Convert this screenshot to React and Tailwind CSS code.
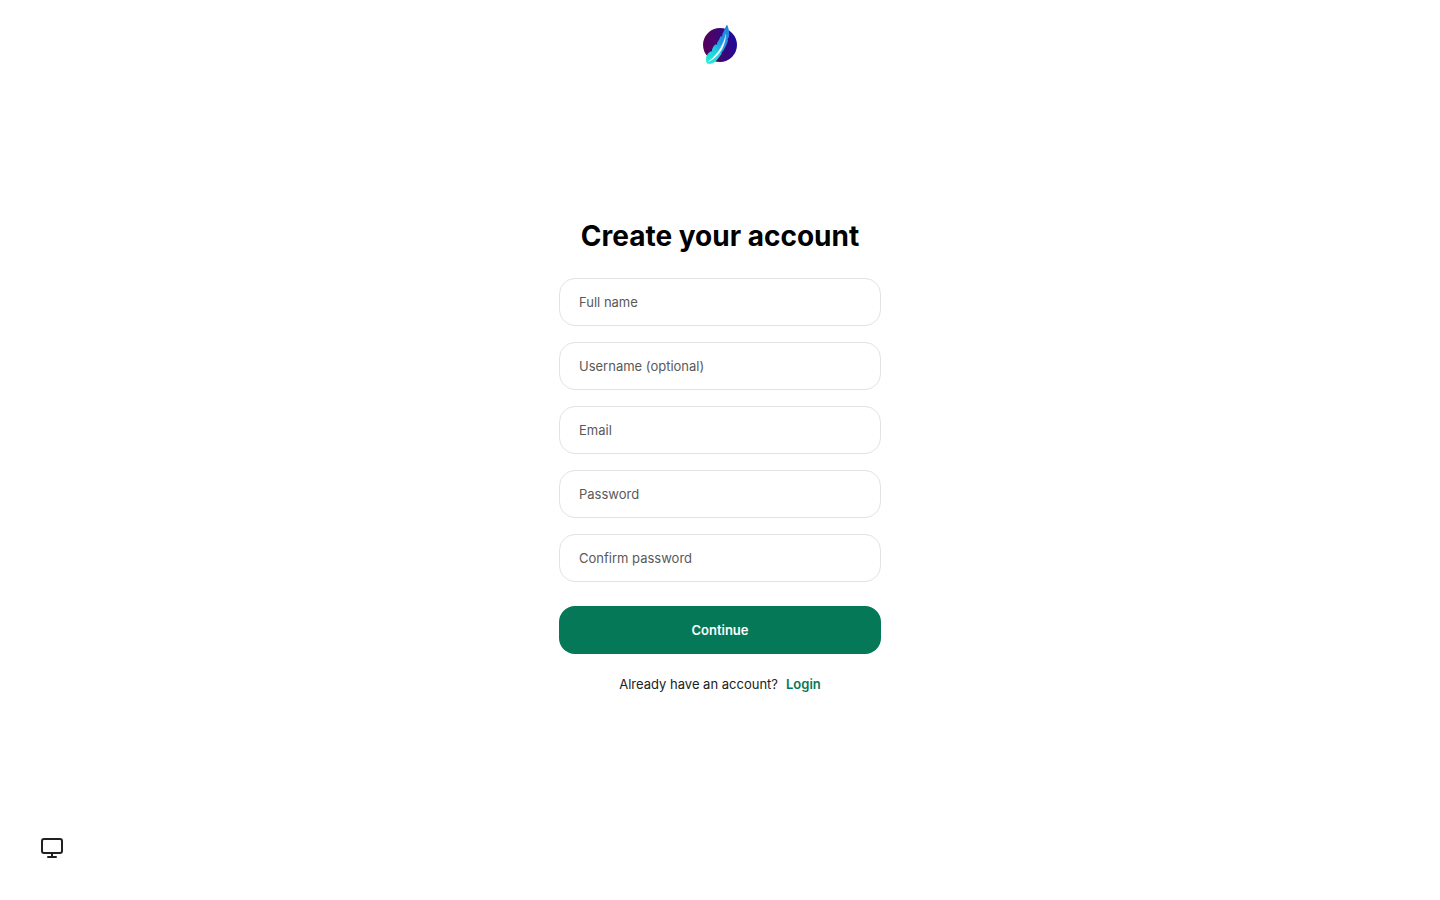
import { Monitor } from "lucide-react";

const fields = [
  { id: "name", label: "Full name", type: "text", autoComplete: "name" },
  { id: "username", label: "Username (optional)", type: "text", autoComplete: "username" },
  { id: "email", label: "Email", type: "email", autoComplete: "email" },
  { id: "password", label: "Password", type: "password", autoComplete: "new-password" },
  { id: "confirm-password", label: "Confirm password", type: "password", autoComplete: "new-password" },
];

function Logo() {
  return (
    <svg viewBox="0 0 40 40" className="h-10 w-10" role="img" aria-label="Logo">
      <defs>
        <linearGradient id="disc" x1="0" y1="0.6" x2="1" y2="0.4">
          <stop offset="0" stopColor="#570058" />
          <stop offset="0.45" stopColor="#420670" />
          <stop offset="1" stopColor="#1f0a9c" />
        </linearGradient>
        <linearGradient id="feather" x1="0.2" y1="1" x2="0.8" y2="0">
          <stop offset="0" stopColor="#22ead8" />
          <stop offset="0.35" stopColor="#20ccdf" />
          <stop offset="0.6" stopColor="#2196e8" />
          <stop offset="1" stopColor="#2383dc" />
        </linearGradient>
      </defs>
      <circle cx="20" cy="21" r="17" fill="url(#disc)" />
      <path
        d="M27 0.5 C28.8 4 29.6 8.500 28.800 13 L27.600 15.600 L28 16.500 C26.800 20.500 25 24 23.200 26.800 L21.400 28.400 L22 29 C20 32.500 17.300 36 14.700 38 C12 40 9 40.200 7.200 39.500 C6 38 5.800 35.600 6.300 32 L7.500 32.200 L7 31 C8 29.400 9.400 28 11 27.200 L12.200 27.600 L12 26 C12.600 23.500 14 21.300 15.800 20.200 L17.200 20.800 L17.200 18.800 C18.500 16.500 20 14.500 20.300 12.600 L22.200 12.200 L22.400 10 C24 7.500 24.800 3.600 27 0.5Z"
        fill="url(#feather)"
      />
      <path
        d="M8 37.800 C13.500 34 17.600 29.200 20.700 23.800 C23.100 19.600 24.900 15 25.800 10.500 C25.600 15.500 24.400 20 22.200 24.400 C19.200 30 14.500 35 8 37.800Z"
        fill="#fff"
        stroke="#fff"
        strokeWidth="0.3"
      />
    </svg>
  );
}

export default function App() {
  return (
    <div className="flex min-h-screen flex-col bg-white font-['Inter',sans-serif] text-[13px] leading-5 text-[#212121]">
      <header className="flex justify-center pt-6">
        <Logo />
      </header>

      <main className="flex flex-1 flex-col items-center justify-center px-4 pt-3">
        <div className="w-full max-w-[322px]">
          <h1 className="mb-6 text-center text-[28px] leading-9 font-bold text-black">Create your account</h1>
          <form onSubmit={(e) => e.preventDefault()}>
            <div className="flex flex-col gap-4">
              {fields.map((f) => (
                <div key={f.id} className="relative">
                  <input
                    id={f.id}
                    name={f.id}
                    type={f.type}
                    autoComplete={f.autoComplete}
                    placeholder=" "
                    className="peer block h-12 w-full rounded-2xl border border-[#e3e3e3] bg-white px-5 focus:border-[#047857] focus:outline-none"
                  />
                  <label
                    htmlFor={f.id}
                    className="pointer-events-none absolute -top-2.5 left-4 bg-white px-1 text-[#595959] peer-placeholder-shown:top-3.5 peer-focus:-top-2.5 peer-focus:text-[#047857]"
                  >
                    {f.label}
                  </label>
                </div>
              ))}
            </div>
            <button
              type="submit"
              className="mt-6 h-12 w-full cursor-pointer rounded-2xl bg-[#047857] font-semibold text-white hover:bg-[#065f46]"
            >
              Continue
            </button>
          </form>
          <p className="mt-5 flex flex-wrap justify-center gap-2">
            Already have an account?
            <a href="#login" className="font-semibold text-[#047857]">
              Login
            </a>
          </p>
        </div>
      </main>

      <footer className="flex px-10 pb-10">
        <button type="button" aria-label="Theme" className="cursor-pointer">
          <Monitor size={24} strokeWidth={2} />
        </button>
      </footer>
    </div>
  );
}
